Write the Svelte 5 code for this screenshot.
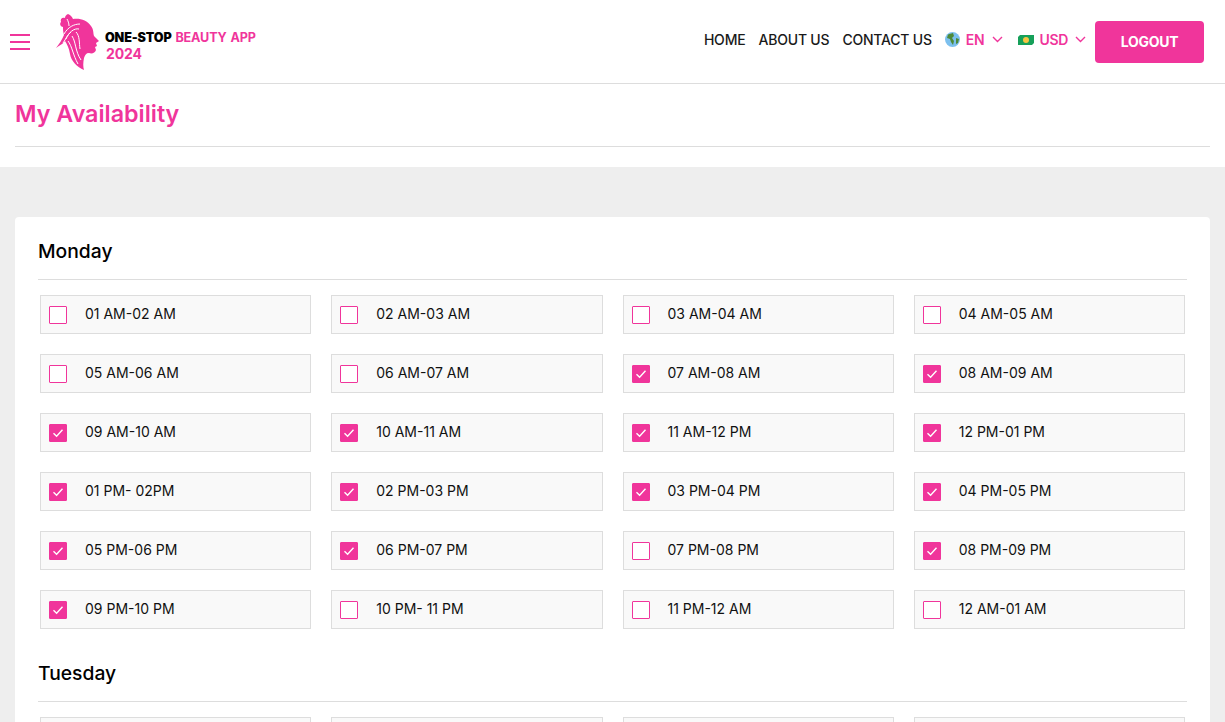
<script>
  const rows = [
    ["01 AM-02 AM", 0], ["02 AM-03 AM", 0], ["03 AM-04 AM", 0], ["04 AM-05 AM", 0],
    ["05 AM-06 AM", 0], ["06 AM-07 AM", 0], ["07 AM-08 AM", 1], ["08 AM-09 AM", 1],
    ["09 AM-10 AM", 1], ["10 AM-11 AM", 1], ["11 AM-12 PM", 1], ["12 PM-01 PM", 1],
    ["01 PM- 02PM", 1], ["02 PM-03 PM", 1], ["03 PM-04 PM", 1], ["04 PM-05 PM", 1],
    ["05 PM-06 PM", 1], ["06 PM-07 PM", 1], ["07 PM-08 PM", 0], ["08 PM-09 PM", 1],
    ["09 PM-10 PM", 1], ["10 PM- 11 PM", 0], ["11 PM-12 AM", 0], ["12 AM-01 AM", 0]
  ];
</script>

{#snippet slot(label, on)}
  <div class="slot">
    <span class="box" class:on>
      {#if on}
        <svg width="12" height="10" viewBox="0 0 12 10"><path d="M1.5 5.2 4.6 8.2 10.5 1.8" fill="none" stroke="#fff" stroke-width="1.4"/></svg>
      {/if}
    </span>
    <span class="label">{label}</span>
  </div>
{/snippet}

<header class="top">
  <div class="burger"><i></i><i></i><i></i></div>
  <svg class="logo" width="44" height="58" viewBox="0 0 44 58">
    <path fill="#f0359b" d="M12 1C15 2 16 4 17 6C24 5 31 7 35 13C38 17 37 20 38 23L43 28L40 30L41 33L39 34L40 37C39 40 36 41 33 40C30 40 29 42 28 45C27 50 27 54 28 57C21 54 15 48 14 41C13 35 11 31 9 28C7 31 4 32 0 35C3 31 6 27 8 22C7 19 7 16 7 14C5 14 3 11 5 9C4 6 6 4 9 5C9 3 10 2 12 1Z"/>
    <path fill="none" stroke="#fff" stroke-width="1" d="M8 21C12 14 18 11 24 11M10 26C13 19 18 15 23 16M7 30C10 26 11 22 15 19M12 28C16 33 17 42 22 51M16 23C20 29 19 38 25 47M20 19C24 23 23 30 24 36M11 6C12 8 13 10 13 13"/>
  </svg>
  <div class="brand">
    <div><b>ONE-STOP</b> BEAUTY APP</div>
    <div class="year">2024</div>
  </div>
  <nav>
    <a href="#home">HOME</a>
    <a href="#about">ABOUT US</a>
    <a href="#contact">CONTACT US</a>
    <span class="pick lang">
      <svg width="15" height="15" viewBox="0 0 15 15"><circle cx="7.5" cy="7.5" r="7.5" fill="#7cc0ee"/><path fill="#4f8a3a" d="M3 2.5 8 1l1 3-2 2 2 3-1 4-2-3-1-3-3-1zM11 6l3 1-1 4-2 1z"/></svg>
      EN
      <svg class="chev" width="11" height="7" viewBox="0 0 11 7"><path d="M1 1 5.5 5.5 10 1" fill="none" stroke="#f0359b" stroke-width="1.4"/></svg>
    </span>
    <span class="pick">
      <svg width="16" height="10" viewBox="0 0 16 10"><path fill="#16a05a" d="M2 0h14v8l-2 2H0V2z"/><circle cx="8" cy="5" r="3" fill="#f5c542"/></svg>
      USD
      <svg class="chev" width="11" height="7" viewBox="0 0 11 7"><path d="M1 1 5.5 5.5 10 1" fill="none" stroke="#f0359b" stroke-width="1.4"/></svg>
    </span>
    <button>LOGOUT</button>
  </nav>
</header>

<section class="title">
  <h1>My Availability</h1>
</section>

<main>
  <div class="card">
    <h2>Monday</h2>
    <div class="grid">
      {#each rows as [label, on]}
        {@render slot(label, on)}
      {/each}
    </div>
    <h2 class="next">Tuesday</h2>
    <div class="grid">
      {#each rows.slice(0, 4) as [label]}
        <div class="slot"></div>
      {/each}
    </div>
  </div>
</main>

<style>
  :global(body) {
    font-family: Inter, "Liberation Sans", sans-serif;
    overflow: hidden;
    height: 722px;
    background: #eeeeee;
  }
  .top {
    display: flex;
    align-items: center;
    height: 83px;
    background: #fff;
    border-bottom: 1px solid #ddd;
    padding: 0 21px 0 10px;
  }
  .burger {
    display: flex;
    flex-direction: column;
    gap: 5px;
    width: 20px;
    margin-right: 26px;
  }
  .burger i {
    height: 2px;
    background: #f0359b;
  }
  .brand {
    margin: 8px 0 0 5px;
    font-size: 12.6px;
    font-weight: 700;
    line-height: 16px;
    color: #f0359b;
    letter-spacing: -0.15px;
    word-spacing: 1px;
    white-space: nowrap;
  }
  .brand b {
    color: #000;
  }
  .year {
    font-size: 14px;
    padding-left: 1px;
  }
  nav {
    margin-left: auto;
    display: flex;
    align-items: center;
    font-size: 14px;
    font-weight: 500;
    white-space: nowrap;
  }
  nav a {
    color: #1a1a1a;
    text-decoration: none;
    margin: 0 13px 4px 0;
    letter-spacing: -0.2px;
  }
  .pick {
    display: flex;
    align-items: center;
    gap: 5px;
    color: #f0359b;
    font-weight: 600;
    letter-spacing: -0.3px;
    margin: 0 9px 4px 0;
  }
  .lang {
    gap: 6px;
    margin-right: 15px;
  }
  .chev {
    margin-left: 2px;
  }
  button {
    width: 109px;
    height: 42px;
    border: 0;
    border-radius: 4px;
    background: #f0359b;
    color: #fff;
    font: 700 14px Inter, sans-serif;
    letter-spacing: -0.3px;
  }
  .title {
    background: #fff;
    padding: 0 15px 20px;
  }
  h1 {
    margin: 0;
    height: 62px;
    line-height: 59px;
    font-size: 23.3px;
    font-weight: 600;
    color: #f0359b;
    border-bottom: 1px solid #ddd;
  }
  main {
    padding: 50px 15px 0;
  }
  .card {
    background: #fff;
    border-radius: 4px;
    padding: 16px 23px;
  }
  h2 {
    margin: 0 0 15px;
    height: 46px;
    line-height: 36px;
    font-size: 19.3px;
    font-weight: 500;
    color: #000;
    border-bottom: 1px solid #ddd;
  }
  .next {
    margin-top: 26px;
  }
  .grid {
    display: grid;
    grid-template-columns: repeat(4, 1fr);
    gap: 20px;
    padding: 0 2px;
  }
  .slot {
    display: flex;
    align-items: center;
    gap: 18px;
    height: 39px;
    box-sizing: border-box;
    padding-left: 8px;
    background: #f9f9f9;
    border: 1px solid #ddd;
    font-size: 14px;
    color: #111;
  }
  .label {
    margin-bottom: 2px;
  }
  .box {
    width: 18px;
    height: 18px;
    box-sizing: border-box;
    border: 1px solid #f0359b;
    border-radius: 1px;
    background: #fff;
    display: flex;
    align-items: center;
    justify-content: center;
  }
  .box.on {
    background: #f0359b;
  }
</style>
